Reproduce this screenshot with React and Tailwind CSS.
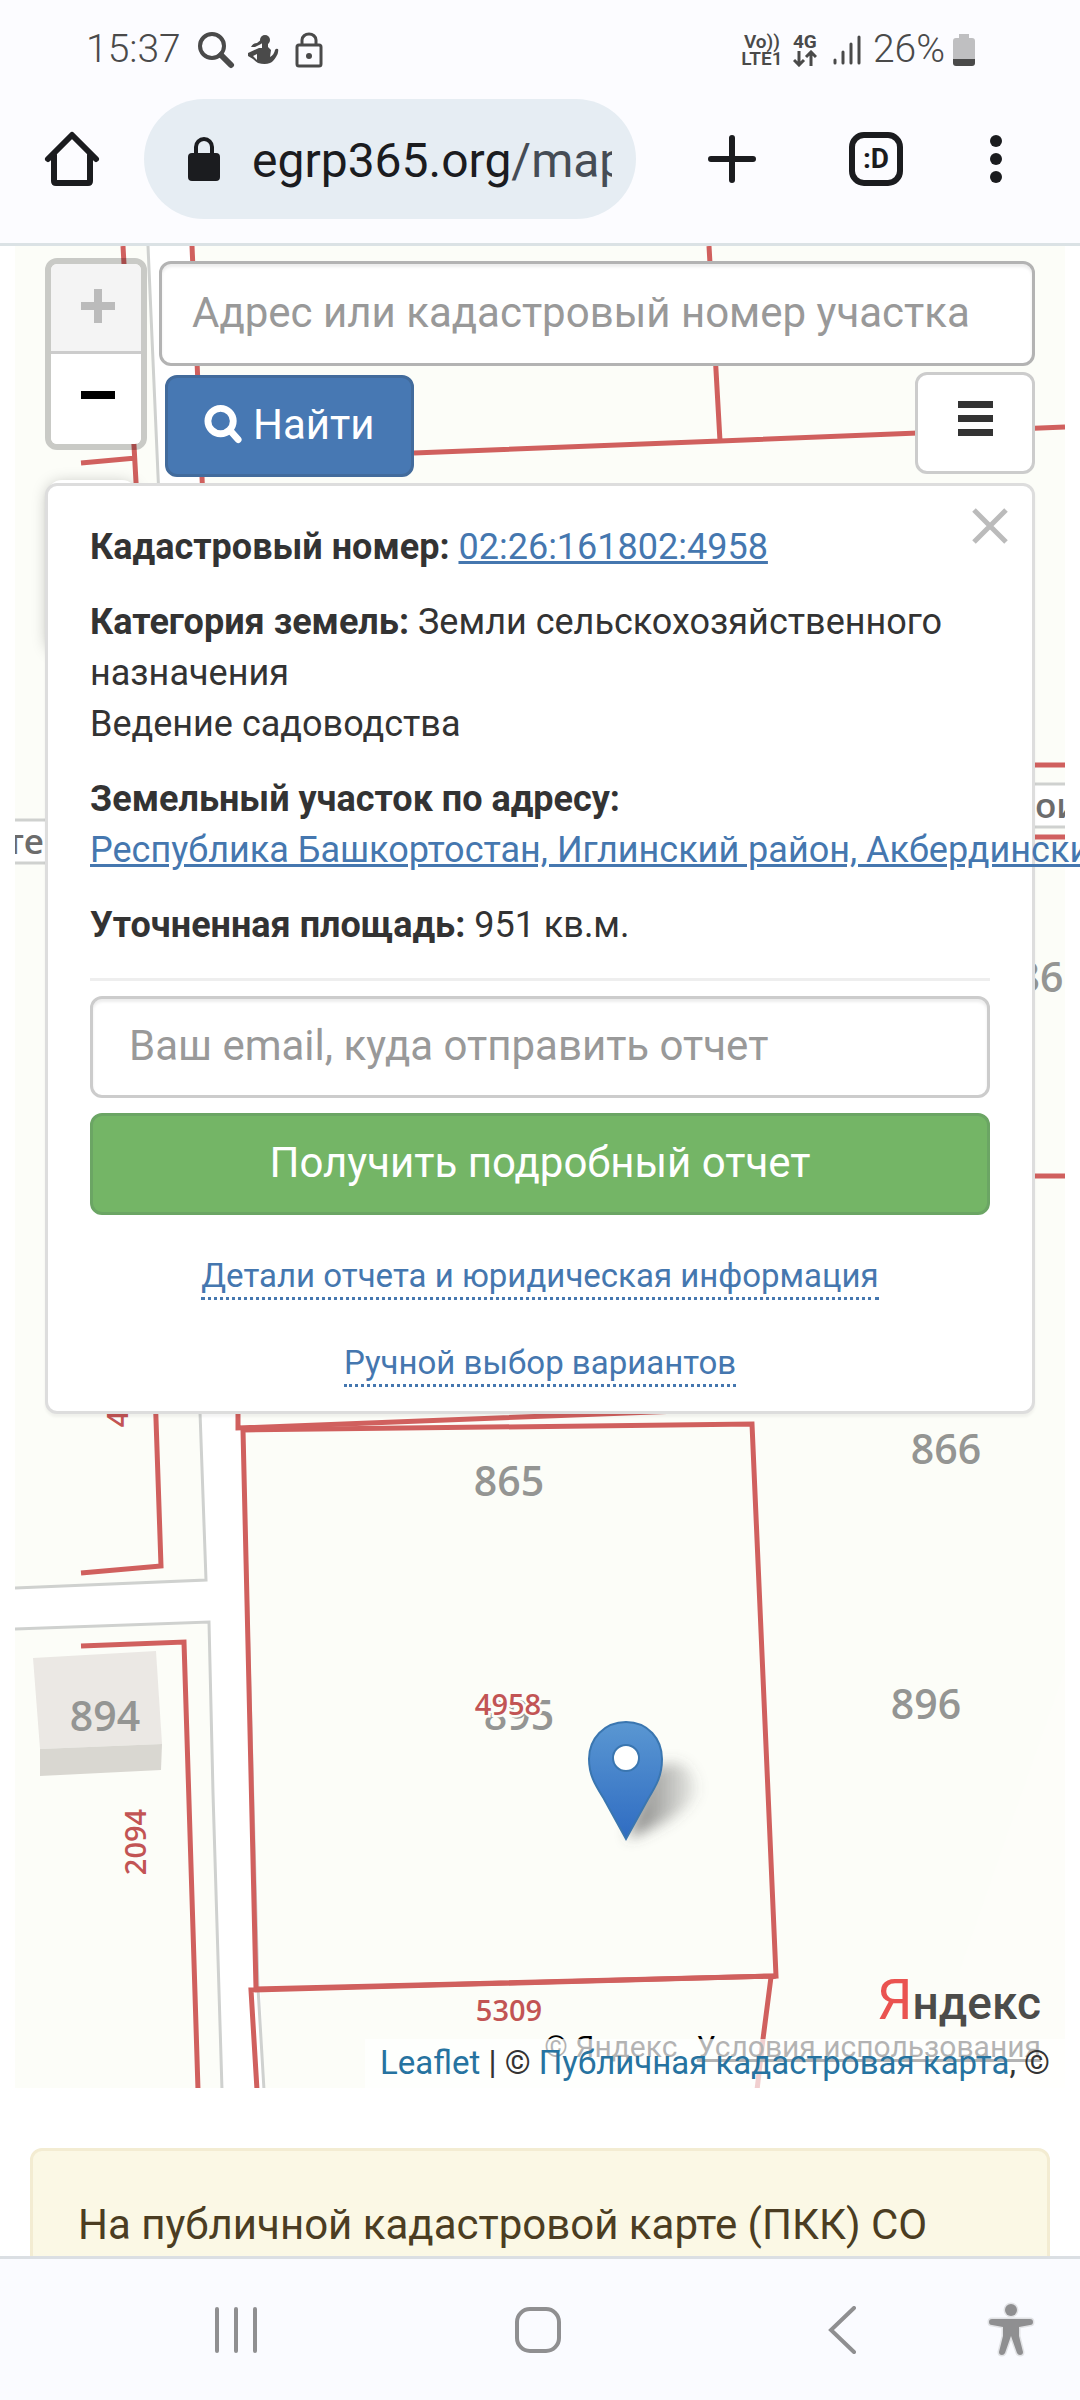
import React, { useState } from "react";

const RED = "#d0605e";

function StatusBar() {
  return (
    <div className="flex h-[99px] items-center justify-between pl-[86px] pr-[105px] text-[#4a4a4a]">
      <div className="flex items-center">
        <span className="text-[39px] font-light leading-none">15:37</span>
        <svg className="ml-4 h-[38px] w-[38px]" viewBox="0 0 38 38" fill="none" stroke="currentColor" aria-hidden="true">
          <circle cx="15" cy="15" r="12" strokeWidth="4" />
          <path d="M24 24l10 10" strokeWidth="6" strokeLinecap="round" />
        </svg>
        <svg className="ml-3 h-[34px] w-[32px]" viewBox="0 0 32 34" fill="currentColor" aria-hidden="true">
          <ellipse cx="18" cy="7" rx="5" ry="5" />
          <path d="M15 6L10 10Q6 10 4 14L8 14L14 11zM15 10h6v4l3 3-1 7q4-2 5-7 1-2 3-1 1 3-2 8-3 5-6 6-5 2-12 0Q8 28 6 26L1 23V20L12 15h3zM10 21L6 23l4 4z" fillRule="evenodd" />
        </svg>
        <svg className="ml-4 h-[36px] w-[28px]" viewBox="0 0 28 36" fill="none" stroke="currentColor" strokeWidth="3" aria-hidden="true">
          <rect x="2" y="13" width="24" height="21" rx="2" />
          <path d="M7 13V8a7 6 0 0 1 14 0v5" />
          <circle cx="14" cy="24" r="3" fill="currentColor" stroke="none" />
        </svg>
      </div>

      <div className="flex items-center">
        <div className="flex w-[38px] flex-col items-center text-[19px] font-semibold leading-[17px]">
          <span>Vo))</span>
          <span>LTE1</span>
        </div>
        <div className="ml-3 flex flex-col items-center">
          <span className="text-[19px] font-bold leading-[17px]">4G</span>
          <svg className="h-[17px] w-[24px]" viewBox="0 0 24 17" fill="none" stroke="currentColor" strokeWidth="3" aria-hidden="true">
            <path d="M6 1v14M1 10l5 5 5-5M18 16V2M13 7l5-5 5 5" />
          </svg>
        </div>
        <svg className="ml-4 h-[30px] w-[28px]" viewBox="0 0 28 30" stroke="currentColor" strokeWidth="3" strokeLinecap="round" aria-hidden="true">
          <path d="M2 25v3M10 17v11M18 9v19M26 2v26" />
        </svg>
        <span className="ml-3 text-[39px] font-light leading-none">26%</span>
        <svg className="ml-2 h-[32px] w-[22px]" viewBox="0 0 22 32" aria-hidden="true">
          <path d="M6 0h10v4h3q3 0 3 3v18H0V7q0-3 3-3h3z" fill="#bfbfc1" />
          <path d="M0 25h22v4q0 3-3 3H3q-3 0-3-3z" fill="#4a4a4a" />
        </svg>
      </div>
    </div>
  );
}

function Toolbar() {
  return (
    <div className="flex items-center pb-6 pl-[42px] pr-[78px] text-[#1b1c1f]">
      <button type="button" aria-label="Главная страница">
        <svg className="h-[60px] w-[60px]" viewBox="0 0 60 60" fill="none" stroke="currentColor" strokeWidth="6" strokeLinejoin="round" strokeLinecap="round">
          <path d="M6 30L30 6l24 24M12 26v26q0 2 2 2h32q2 0 2-2V26" />
        </svg>
      </button>

      <div className="ml-[42px] flex h-[120px] min-w-0 flex-1 items-center rounded-full bg-[#e6edf3] pl-11 pr-6">
        <svg className="h-[44px] w-[32px] shrink-0" viewBox="0 0 32 44" aria-hidden="true">
          <path d="M8 18V10a8 8 0 0 1 16 0v8" fill="none" stroke="currentColor" strokeWidth="4" />
          <rect y="16" width="32" height="28" rx="4" fill="currentColor" />
        </svg>
        <div className="ml-8 flex-1 overflow-hidden whitespace-nowrap pt-1 text-[48px] leading-[64px]">
          egrp365.org<span className="text-[#454c55]">/map</span>
        </div>
      </div>

      <button type="button" aria-label="Новая вкладка" className="ml-[72px]">
        <svg className="h-[48px] w-[48px]" viewBox="0 0 48 48" stroke="currentColor" strokeWidth="6" strokeLinecap="round">
          <path d="M24 3v42M3 24h42" />
        </svg>
      </button>
      <button
        type="button"
        className="ml-[93px] flex h-[54px] w-[54px] items-center justify-center rounded-[15px] border-6 border-[#1b1c1f] text-[28px] font-bold leading-none"
      >
        :D
      </button>
      <button type="button" aria-label="Меню браузера" className="ml-[87px]">
        <svg className="h-[48px] w-[12px]" viewBox="0 0 12 48" fill="currentColor">
          <circle cx="6" cy="6" r="6" />
          <circle cx="6" cy="24" r="6" />
          <circle cx="6" cy="42" r="6" />
        </svg>
      </button>
    </div>
  );
}

function MapCanvas() {
  return (
    <svg
      className="absolute inset-0 h-full w-full"
      viewBox="15 246 1050 1842"
      preserveAspectRatio="xMidYMin slice"
      role="img"
      aria-label="Карта участков"
    >
      <defs>
        <linearGradient id="pin" x1="0" y1="0" x2="0" y2="1">
          <stop offset="0" stopColor="#5a97d2" />
          <stop offset="1" stopColor="#2f6cc2" />
        </linearGradient>
        <linearGradient id="shade" x1="0" y1="0" x2="1" y2="0">
          <stop offset="0" stopColor="#555" stopOpacity="0.75" />
          <stop offset="1" stopColor="#555" stopOpacity="0.1" />
        </linearGradient>
        <filter id="blur" x="-30%" y="-30%" width="160%" height="160%">
          <feGaussianBlur stdDeviation="7" />
        </filter>
      </defs>

      <rect x="15" y="246" width="1050" height="1842" fill="#fcfdf8" />
      <path d="M1065 1670L960 1970V2088H1065z" fill="#fdfdf9" />

      {/* roads */}
      <g fill="#fff">
        <path d="M148 246H190L241 1412L264 2090H222L213 1793L209 1622L15 1629V1588L206 1580L200 1412L158 475z" />
        <path d="M15 820L1065 784V827L15 863z" />
      </g>
      <g fill="none" stroke="#cfd1cf" strokeWidth="3">
        <path d="M148 246L158 475L200 1412L206 1580L15 1588" />
        <path d="M15 1629L209 1622L213 1793L222 2090M243 1432L258 1988L264 2090" />
        <path d="M15 820H60M15 863H60M1020 784H1065M1020 827H1065" />
      </g>

      {/* building */}
      <path d="M33 1658L156 1651L162 1744L40 1749z" fill="#ebe8e4" />
      <path d="M40 1749L162 1744L161 1770L40 1776z" fill="#d9d7d1" />

      {/* parcels */}
      <g fill="none" stroke={RED} strokeWidth="5">
        <path d="M123 246L137 500M81 463L136 458" />
        <path d="M192 246L203 500M709 246L720 441M414 453L720 441L1065 427" />
        <path d="M1020 765H1065M1020 837H1065M1020 1176H1065" />
        <path d="M155 1390L161 1566L81 1573M81 1646L184 1642L198 2090" />
        <path d="M243 1430L752 1424L776 1976L256 1989z" />
        <path d="M238 1390V1428L680 1411" />
        <path d="M257 2090L251 1990L776 1976L771 1977L763 2039L757 2090" />
      </g>

      <g fontFamily="'Open Sans', 'Noto Sans', sans-serif" fontSize="41" fontWeight="600" fill="#949593" textAnchor="middle">
        <text x="105" y="1731">894</text>
        <text x="509" y="1496">865</text>
        <text x="946" y="1464">866</text>
        <text x="926" y="1719">896</text>
        <text x="519" y="1730">895</text>
        <text x="1040" y="992">86</text>
      </g>
      <g
        fontFamily="'Open Sans', 'Noto Sans', sans-serif"
        fontSize="29"
        fontWeight="600"
        fill="#c25454"
        stroke="#fcfdf8"
        strokeWidth="5"
        paintOrder="stroke"
        textAnchor="middle"
      >
        <text x="508" y="1715">4958</text>
        <text x="509" y="2021">5309</text>
        <text transform="translate(146 1842) rotate(-90)">2094</text>
        <text transform="translate(128 1394) rotate(-90)">4957</text>
      </g>
      <g fontFamily="'Open Sans', sans-serif" fontSize="35" fontWeight="600" fill="#6c6c6c">
        <text x="44" y="854" textAnchor="end">те</text>
        <text x="1035" y="818">ои</text>
      </g>

      {/* marker */}
      <path d="M628 1838L650 1770Q690 1750 697 1790Q690 1815 628 1838z" fill="url(#shade)" filter="url(#blur)" />
      <path
        d="M626 1722C604 1722 589 1739 589 1759C589 1776 596 1786 604 1799L626 1839L648 1799C656 1786 662 1776 662 1759C662 1739 648 1722 626 1722z"
        fill="url(#pin)"
        stroke="#3a76b0"
        strokeWidth="2"
      />
      <circle cx="626" cy="1758" r="13" fill="#fff" stroke="#3a76b0" strokeWidth="2" />
    </svg>
  );
}

function ZoomControl() {
  return (
    <div className="flex w-[102px] shrink-0 flex-col rounded-[12px] border-6 border-black/20 bg-clip-padding">
      <button type="button" disabled aria-label="Приблизить" className="flex h-[90px] items-center justify-center rounded-t-md border-b-3 border-[#ccc] bg-[#f4f4f4] pb-1 pl-1 text-[#bbb]">
        <svg className="h-[34px] w-[34px]" viewBox="0 0 34 34" stroke="currentColor" strokeWidth="8">
          <path d="M17 0v34M0 17h34" />
        </svg>
      </button>
      <button type="button" aria-label="Отдалить" className="flex h-[90px] items-center justify-center rounded-b-md bg-white pl-1 text-black">
        <svg className="h-[34px] w-[34px]" viewBox="0 0 34 34" stroke="currentColor" strokeWidth="8">
          <path d="M0 13h34" />
        </svg>
      </button>
    </div>
  );
}

function SearchForm() {
  const [query, setQuery] = useState("");

  return (
    <form className="ml-3 min-w-0 flex-1 pt-[3px]" onSubmit={(e) => e.preventDefault()}>
      <input
        type="text"
        aria-label="Адрес или кадастровый номер участка"
        placeholder="Адрес или кадастровый номер участка"
        value={query}
        onChange={(e) => setQuery(e.target.value)}
        className="block h-[105px] w-full rounded-[12px] border-3 border-[#b3b3b3] bg-white px-[30px] pb-0.5 text-[42px] text-[#555] shadow-[inset_0_3px_3px_rgba(0,0,0,0.075)] placeholder:text-[#999]"
      />
      <div className="flex items-start justify-between pl-1.5 pt-1.5">
        <button
          type="submit"
          className="mt-[3px] flex h-[102px] items-center rounded-[12px] border-3 border-[#426b9c] bg-[#4778b3] px-9 pb-1 text-[42px] text-white"
        >
          <svg className="mr-2.5 h-[40px] w-[39px]" viewBox="0 0 40 40" fill="none" stroke="currentColor" aria-hidden="true">
            <circle cx="17" cy="17" r="13" strokeWidth="7" />
            <path d="M27 27l8 9" strokeWidth="7" strokeLinecap="round" />
          </svg>
          Найти
        </button>
        <button
          type="button"
          aria-label="Меню"
          className="flex h-[102px] w-[120px] items-center justify-center rounded-[12px] border-3 border-[#ccc] bg-white pb-2 text-[#333]"
        >
          <svg className="h-[36px] w-[35px]" viewBox="0 0 35 36" fill="currentColor">
            <path d="M0 0h35v7H0zM0 14h35v7H0zM0 28h35v7H0z" />
          </svg>
        </button>
      </div>
    </form>
  );
}

function InfoPanel() {
  const [email, setEmail] = useState("");

  return (
    <section className="relative mt-1.5 flex flex-col rounded-[12px] border-3 border-[#ddd] bg-white px-[42px] pb-6 pt-9 text-[#333] shadow-[0_3px_3px_rgba(0,0,0,0.05)]">
      <button type="button" aria-label="Закрыть" className="absolute right-6 top-[22px] text-[#bbb]">
        <svg className="h-[36px] w-[36px]" viewBox="0 0 36 36" stroke="currentColor" strokeWidth="5">
          <path d="M2 2l32 32M34 2L2 34" />
        </svg>
      </button>

      <div className="flex flex-col gap-6 text-[36px] leading-[51px]">
        <p>
          <b>Кадастровый номер:</b>{" "}
          <a href="#number" className="text-[#4577af] underline">02:26:161802:4958</a>
        </p>
        <p>
          <b>Категория земель:</b> Земли сельскохозяйственного назначения
          <br />
          Ведение садоводства
        </p>
        <p>
          <b>Земельный участок по адресу:</b>
          <br />
          <a href="#address" className="whitespace-nowrap text-[#4577af] underline">
            Республика Башкортостан, Иглинский район, Акбердинский
          </a>
        </p>
        <p>
          <b>Уточненная площадь:</b> 951 кв.м.
        </p>
      </div>

      <hr className="mt-[27px] border-t-3 border-[#eee]" />
      <input
        type="email"
        aria-label="Ваш email, куда отправить отчет"
        placeholder="Ваш email, куда отправить отчет"
        value={email}
        onChange={(e) => setEmail(e.target.value)}
        className="mt-[15px] h-[102px] w-full rounded-[12px] border-3 border-[#ccc] bg-white px-9 pb-1 text-[42px] text-[#555] shadow-[inset_0_3px_3px_rgba(0,0,0,0.075)] placeholder:text-[#999]"
      />
      <button type="button" className="mt-[15px] h-[102px] rounded-[12px] border-3 border-[#6ba564] bg-[#74b566] pb-1 text-[42px] text-white">
        Получить подробный отчет
      </button>

      <div className="mt-10 flex flex-col items-center gap-[42px] text-[33px] leading-[42px] text-[#4577af]">
        <a href="#details" className="border-b-3 border-dotted border-[#4577af]">
          Детали отчета и юридическая информация
        </a>
        <a href="#manual" className="border-b-3 border-dotted border-[#4577af]">
          Ручной выбор вариантов
        </a>
      </div>
    </section>
  );
}

function MapFooter() {
  return (
    <footer className="relative flex flex-col items-end">
      <div className="mr-6 text-[46px] font-medium leading-[72px] text-[#4c4c4a]">
        <span className="text-[56px] font-normal text-[#ea5350]">Я</span>ндекс
      </div>
      <div className="relative flex w-full justify-end">
        <p className="absolute -top-2.5 right-6 whitespace-nowrap text-[30px] leading-[36px] text-black">
          © Яндекс <a href="#terms" className="ml-3 underline">Условия использования</a>
        </p>
        <p className="relative whitespace-nowrap bg-white/70 px-[15px] pb-0.5 text-[33px] leading-[47px] text-[#333]">
          <a href="#leaflet" className="text-[#2673a0]">Leaflet</a> | ©{" "}
          <a href="#pkk" className="text-[#2673a0]">Публичная кадастровая карта</a>, ©
        </p>
      </div>
    </footer>
  );
}

function NavBar() {
  return (
    <nav className="flex h-[144px] shrink-0 items-center justify-between border-t-3 border-[#dbdfe3] bg-[#fafbff] pl-[213px] pr-[45px] text-[#8f8f91]">
      <button type="button" aria-label="Недавние">
        <svg className="h-[48px] w-[46px]" viewBox="0 0 46 48" stroke="currentColor" strokeWidth="4" strokeLinecap="round">
          <path d="M4 3v42M23 3v42M42 3v42" />
        </svg>
      </button>
      <button type="button" aria-label="Домой" className="mr-2.5">
        <svg className="h-[48px] w-[48px]" viewBox="0 0 48 48" fill="none" stroke="currentColor" strokeWidth="4">
          <rect x="3" y="3" width="42" height="42" rx="13" />
        </svg>
      </button>
      <div className="flex items-center gap-[130px]">
        <button type="button" aria-label="Назад">
          <svg className="h-[48px] w-[30px]" viewBox="0 0 30 48" fill="none" stroke="currentColor" strokeWidth="4" strokeLinecap="round">
            <path d="M27 2L4 24l23 22" />
          </svg>
        </button>
        <button type="button" aria-label="Специальные возможности">
          <svg className="h-[56px] w-[48px]" viewBox="0 0 48 56" fill="currentColor" stroke="#e2e3e6" strokeWidth="3" paintOrder="stroke">
            <circle cx="24" cy="8" r="6" />
            <path d="M5 17h38q3 0 3 3t-3 3l-11 2v9l4 16q0 3-3 3-2 0-3-2l-6-17-6 17q-1 2-3 2-3 0-3-3l4-16v-9L5 23q-3 0-3-3t3-3z" />
          </svg>
        </button>
      </div>
    </nav>
  );
}

export default function App() {
  return (
    <div className="flex h-screen flex-col overflow-hidden bg-white font-['Roboto',sans-serif]">
      <header className="shrink-0 border-b-3 border-[#dbe2e5] bg-[#fcfcff]">
        <StatusBar />
        <Toolbar />
      </header>

      <main className="min-h-0 flex-1 overflow-hidden px-[15px]">
        <div className="relative flex min-h-[1842px] flex-col justify-between">
          <MapCanvas />
          <div className="relative px-[30px] pt-3">
            <div className="flex items-start">
              <ZoomControl />
              <SearchForm />
            </div>
            {/* layers toggle, mostly under the panel */}
            <div className="absolute left-[32px] top-[234px] h-[170px] w-[90px] rounded-[15px] bg-white shadow-[0_3px_15px_rgba(0,0,0,0.25)]" />
            <InfoPanel />
          </div>
          <MapFooter />
        </div>

        <div className="mx-[15px] mt-[60px] rounded-[12px] border-3 border-[#f3ecd2] bg-[#fbf8e5] px-[45px] py-11 text-[42px] leading-[60px] text-[#4b3d22]">
          На публичной кадастровой карте (ПКК) СО
        </div>
      </main>

      <NavBar />
    </div>
  );
}
